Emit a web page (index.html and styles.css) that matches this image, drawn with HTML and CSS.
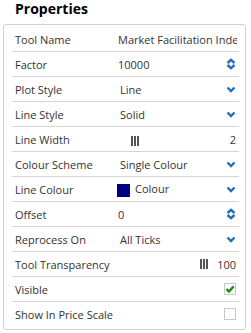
FILE: index.html
```html
<!DOCTYPE html>
<html>
<head>
<meta charset="utf-8">
<link rel="stylesheet" href="styles.css">
</head>
<body>
<h1 class="title">Properties</h1>
<div class="panel">
  <div class="row">
    <span class="label">Tool Name</span>
    <span class="value clip">Market Facilitation Index</span>
  </div>
  <div class="row">
    <span class="label">Factor</span>
    <span class="value">10000</span>
    <svg class="icon" viewBox="0 0 10 12"><path d="M1.5 5 L5 1.8 L8.5 5" /><path d="M1.5 7 L5 10.2 L8.5 7" /></svg>
  </div>
  <div class="row">
    <span class="label">Plot Style</span>
    <span class="value sel">Line</span>
    <svg class="icon" viewBox="0 0 10 12"><path d="M1.5 4.5 L5 8 L8.5 4.5" /></svg>
  </div>
  <div class="row">
    <span class="label">Line Style</span>
    <span class="value sel">Solid</span>
    <svg class="icon" viewBox="0 0 10 12"><path d="M1.5 4.5 L5 8 L8.5 4.5" /></svg>
  </div>
  <div class="row">
    <span class="label">Line Width</span>
    <span class="value grip-wrap"><span class="grip"><i></i><i></i><i></i></span></span>
    <span class="num">2</span>
  </div>
  <div class="row">
    <span class="label">Colour Scheme</span>
    <span class="value sel">Single Colour</span>
    <svg class="icon" viewBox="0 0 10 12"><path d="M1.5 4.5 L5 8 L8.5 4.5" /></svg>
  </div>
  <div class="row">
    <span class="label">Line Colour</span>
    <span class="value colour"><span class="swatch"></span><span class="ctext">Colour</span></span>
    <svg class="icon" viewBox="0 0 10 12"><path d="M1.5 4.5 L5 8 L8.5 4.5" /></svg>
  </div>
  <div class="row">
    <span class="label">Offset</span>
    <span class="value">0</span>
    <svg class="icon" viewBox="0 0 10 12"><path d="M1.5 5 L5 1.8 L8.5 5" /><path d="M1.5 7 L5 10.2 L8.5 7" /></svg>
  </div>
  <div class="row">
    <span class="label">Reprocess On</span>
    <span class="value sel">All Ticks</span>
    <svg class="icon" viewBox="0 0 10 12"><path d="M1.5 4.5 L5 8 L8.5 4.5" /></svg>
  </div>
  <div class="row">
    <span class="label">Tool Transparency</span>
    <span class="grip right"><i></i><i></i><i></i></span>
    <span class="num wide">100</span>
  </div>
  <div class="row">
    <span class="label">Visible</span>
    <span class="check on"><svg viewBox="0 0 10 10"><path d="M1.5 5.2 L4 7.6 L8.6 2.4" /></svg></span>
  </div>
  <div class="row last">
    <span class="label">Show In Price Scale</span>
    <span class="check"></span>
  </div>
</div>
</body>
</html>
```
FILE: styles.css
```css
html, body {
  margin: 0;
  padding: 0;
  background: #ffffff;
}
body {
  width: 251px;
  height: 333px;
  overflow: hidden;
  font-family: "Open Sans", "Liberation Sans", sans-serif;
  font-size: 11px;
  color: #333333;
}
.title {
  margin: 0;
  padding: 0 0 0 15px;
  height: 24px;
  font-size: 14px;
  font-weight: 700;
  line-height: 18px;
  color: #000000;
}
.panel {
  margin: 0 5px 0 3px;
  border: 1px solid #cfcfcf;
  border-radius: 3px;
  padding: 2px 6px 3px 8px;
}
.row {
  display: flex;
  align-items: center;
  height: 24px;
  border-bottom: 1px solid #d4d4d4;
  padding: 0 3px;
}
.row.last {
  border-bottom: none;
}
.label {
  width: 103px;
  flex: none;
  white-space: nowrap;
}
.value {
  flex: 1;
  min-width: 0;
  white-space: nowrap;
}
.value.clip {
  overflow: hidden;
  margin-right: -1px;
}
.value.sel {
  padding-left: 2px;
}
.icon {
  width: 10px;
  height: 12px;
  flex: none;
  fill: none;
  stroke: #1f6fbf;
  stroke-width: 2.4;
  stroke-linecap: butt;
}
.grip {
  display: inline-flex;
  gap: 1px;
  height: 10px;
  margin-left: 13px;
  vertical-align: middle;
}
.grip i {
  display: block;
  width: 2px;
  height: 10px;
  background: #555555;
}
.grip.right {
  margin-left: auto;
}
.num {
  flex: none;
  text-align: right;
  width: 20px;
}
.num.wide {
  width: 28px;
}
.colour {
  display: flex;
  align-items: center;
  margin-left: -1px;
}
.swatch {
  width: 13px;
  height: 13px;
  background: #000080;
  margin-right: 5px;
  margin-top: 2px;
}
.ctext {
  margin-top: -2px;
}
.check {
  margin-left: auto;
  width: 10px;
  height: 10px;
  border: 1px solid #c8c8c8;
  background: #ffffff;
  margin-right: 0;
  display: flex;
  align-items: center;
  justify-content: center;
}
.check svg {
  width: 10px;
  height: 10px;
  fill: none;
  stroke: #1a8a1a;
  stroke-width: 2.4;
}
```
